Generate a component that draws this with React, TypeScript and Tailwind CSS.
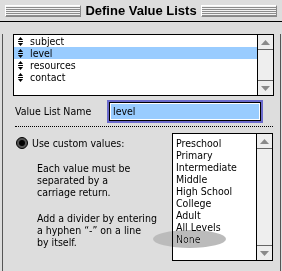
import React from 'react';

const lists = ['subject', 'level', 'resources', 'contact'];
const values = ['Preschool', 'Primary', 'Intermediate', 'Middle', 'High School', 'College', 'Adult', 'All Levels', 'None'];

function SortIcon() {
  return (
    <svg width="5" height="9" viewBox="0 0 5 9" className="shrink-0">
      <path d="M2.5 0 L5 3 L0 3 Z" fill="#000" />
      <rect x="0" y="4" width="5" height="1" fill="#000" />
      <path d="M0 6 L5 6 L2.5 9 Z" fill="#000" />
    </svg>
  );
}

function Scrollbar() {
  return (
    <div className="flex w-[16px] flex-col border-l border-black bg-[#eeeeee]">
      <div className="flex h-[15px] items-center justify-center border-b border-[#666666]">
        <svg width="9" height="5" viewBox="0 0 9 5">
          <path d="M4.5 0 L9 5 L0 5 Z" fill="#8a8a8a" />
        </svg>
      </div>
      <div className="flex-1" />
      <div className="flex h-[15px] items-center justify-center border-t border-[#666666]">
        <svg width="9" height="5" viewBox="0 0 9 5">
          <path d="M0 0 L9 0 L4.5 5 Z" fill="#8a8a8a" />
        </svg>
      </div>
    </div>
  );
}

function Stripes() {
  return (
    <div className="h-[12px] flex-1 border-t border-l border-white border-r border-b border-r-[#888888] border-b-[#888888] bg-[repeating-linear-gradient(to_bottom,#f2f2f2_0px,#f2f2f2_1px,#8c8c8c_1px,#8c8c8c_2px)]" />
  );
}

export default function App() {
  return (
    <div className="relative h-[271px] w-[282px] overflow-hidden bg-[#dddddd] font-['DejaVu_Sans_Condensed','DejaVu_Sans',sans-serif] text-[10.5px] text-black">
      {/* title bar */}
      <div className="flex h-[22px] items-center gap-[4px] border-b border-black px-[5px]">
        <Stripes />
        <div className="font-['Liberation_Sans',Arial,sans-serif] text-[13px] font-bold leading-none">Define Value Lists</div>
        <Stripes />
      </div>

      <div className="ml-[2px] h-[248px] w-[279px] border-x border-b border-[#555555]">
        {/* value lists */}
        <div className="ml-[10px] mt-[12px] flex h-[62px] w-[261px] border border-black bg-white">
          <div className="flex-1">
            {lists.map((l, i) => (
              <div key={l} className={`flex h-[12px] items-center gap-[7px] pl-[4px] leading-none ${i === 1 ? 'bg-[#99ccff]' : ''}`}>
                <SortIcon />
                <span>{l}</span>
              </div>
            ))}
          </div>
          <Scrollbar />
        </div>

        {/* name field */}
        <div className="mt-[4px] flex items-center pl-[12px]">
          <span className="w-[92px]">Value List Name</span>
          <div className="h-[23px] w-[156px] border-2 border-[#6a6acc]">
            <div className="h-full border border-black bg-white p-[1px]">
              <div className="flex h-full items-center bg-[#99ccff] pl-[2px] leading-none">level</div>
            </div>
          </div>
        </div>

        <div className="ml-[12px] mt-[3px] w-[258px] border-t border-dotted border-black" />

        {/* custom values */}
        <div className="mt-[6px] flex">
          <div className="w-[169px] pl-[13px]">
            <div className="mt-[4px] flex items-center gap-[4px] leading-none">
              <div className="flex h-[12px] w-[12px] items-center justify-center rounded-full border border-black bg-[#555555]">
                <div className="h-[6px] w-[6px] rounded-full bg-black" />
              </div>
              <span>Use custom values:</span>
            </div>
            <div className="mt-[13px] whitespace-nowrap pl-[21px] leading-[12px]">
              <div>Each value must be</div>
              <div>separated by a</div>
              <div>carriage return.</div>
              <div className="mt-[14px]">Add a divider by entering</div>
              <div>a hyphen “-” on a line</div>
              <div>by itself.</div>
            </div>
          </div>
          <div className="flex h-[128px] w-[101px] border border-black bg-white">
            <div className="flex-1 pl-[3px] pt-[3px] leading-[12px]">
              {values.map((v) => (
                <div key={v} className="h-[12px]">{v}</div>
              ))}
            </div>
            <Scrollbar />
          </div>
        </div>
      </div>

      {/* highlight oval */}
      <div className="pointer-events-none absolute left-[153px] top-[230px] h-[18px] w-[73px] rounded-[50%] bg-[#bbbbbb] mix-blend-darken" />
    </div>
  );
}
